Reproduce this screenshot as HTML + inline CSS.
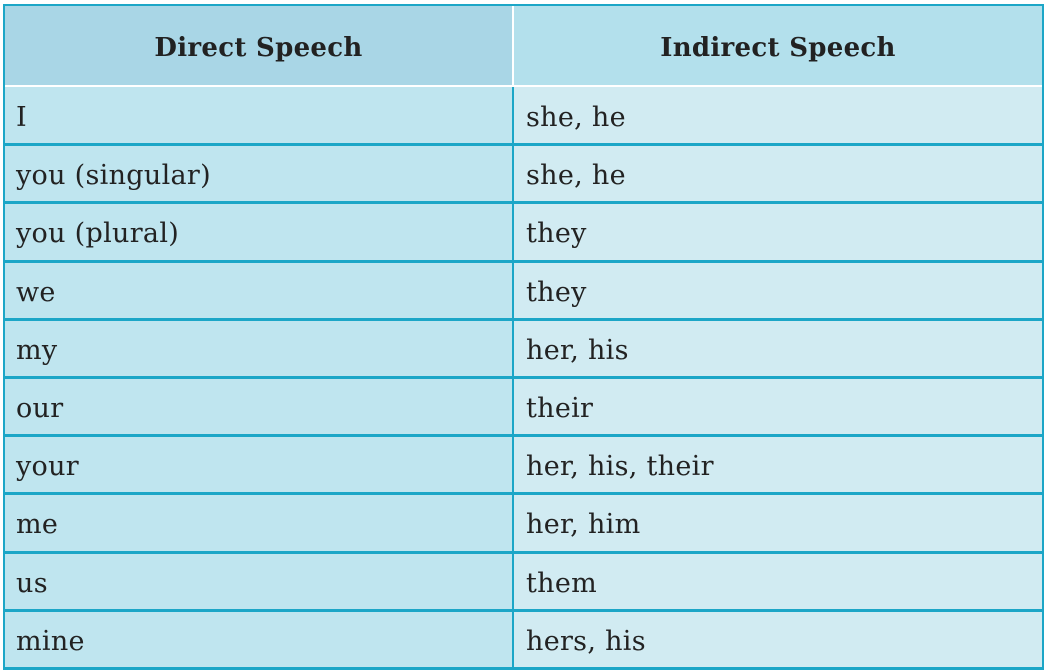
<!DOCTYPE html>
<html><head><style>
body{margin:0;width:1048px;height:672px;background:#fff;position:relative;overflow:hidden;font-family:"DejaVu Serif","Liberation Serif",serif;color:#222;}
.c{position:absolute;display:flex;align-items:center;font-size:27px;box-sizing:border-box;letter-spacing:0.3px;}
.l{left:5px;width:507px;padding-left:11px;background:#bfe5ef;}
.r{left:514px;width:528px;padding-left:12px;background:#d1ebf2;}
.h{font-weight:bold;justify-content:center;padding:0;font-size:26px;}
.ln{position:absolute;background:#1ca6c7;}
</style></head><body>
<div class="c l h" style="top:6px;height:80px;background:#a9d6e6;padding-top:4px">Direct Speech</div>
<div class="c r h" style="top:6px;height:80px;background:#b3e0ec;padding-top:4px">Indirect Speech</div>
<div style="position:absolute;left:512px;top:6px;width:2px;height:80px;background:#fff"></div>
<div style="position:absolute;left:5px;top:85px;width:1037px;height:2px;background:#fff"></div>
<div id="rows"></div>
<script>
var d=[["I","she, he"],["you (singular)","she, he"],["you (plural)","they"],["we","they"],["my","her, his"],["our","their"],["your","her, his, their"],["me","her, him"],["us","them"],["mine","hers, his"]];
var h='';
for(var i=0;i<10;i++){var t=87+i*58.2;
h+='<div class="c l" style="top:'+t+'px;height:57px;padding-top:4px">'+d[i][0]+'</div>';
h+='<div class="c r" style="top:'+t+'px;height:57px;padding-top:4px">'+d[i][1]+'</div>';
if(i>0)h+='<div class="ln" style="left:4px;width:1040px;top:'+(t-2)+'px;height:3px"></div>';}
document.getElementById('rows').innerHTML=h;
</script>
<div class="ln" style="left:4px;top:4px;width:1040px;height:2px"></div>
<div class="ln" style="left:4px;top:667px;width:1040px;height:3px"></div>
<div class="ln" style="left:3px;top:4px;width:2px;height:666px"></div>
<div class="ln" style="left:1042px;top:4px;width:2px;height:666px"></div>
<div class="ln" style="left:512px;top:87px;width:2px;height:582px"></div>
</body></html>
